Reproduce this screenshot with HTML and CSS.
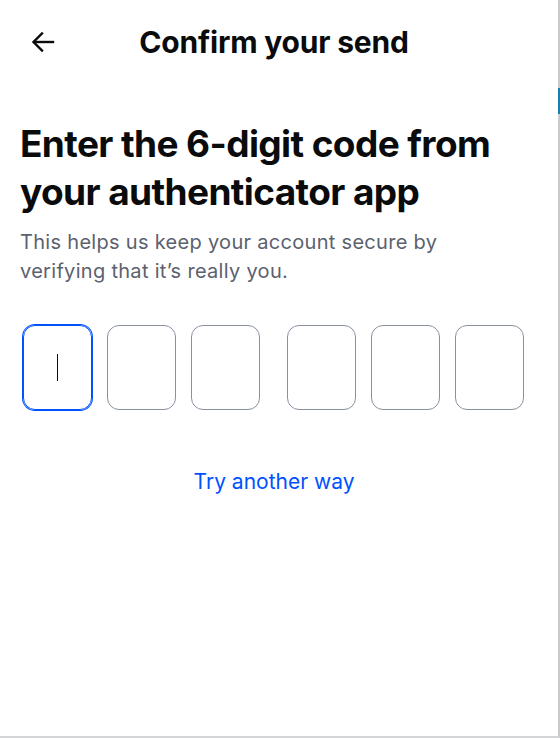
FILE: index.html
```html
<!DOCTYPE html>
<html>
<head>
<meta charset="utf-8">
<link rel="stylesheet" href="styles.css">
</head>
<body>
<div class="frame">
  <div class="scrollmark"></div>
  <header class="topbar">
    <button class="back" aria-label="Back">
      <svg width="24" height="24" viewBox="0 0 24 24" fill="none" stroke="#0a0b0d" stroke-width="2.4" stroke-linecap="square">
        <path d="M22 12H3.5"/>
        <path d="M11 3.5L2.5 12L11 20.5"/>
      </svg>
    </button>
    <h1 class="title">Confirm your send</h1>
    <span class="spacer"></span>
  </header>
  <main class="content">
    <h2 class="heading">Enter the 6-digit code from your authenticator app</h2>
    <p class="sub">This helps us keep your account secure by verifying that it’s really you.</p>
    <div class="code">
      <div class="group">
        <div class="box focused"><span class="caret"></span></div>
        <div class="box"></div>
        <div class="box"></div>
      </div>
      <div class="group">
        <div class="box"></div>
        <div class="box"></div>
        <div class="box"></div>
      </div>
    </div>
    <div class="alt"><a href="#" class="link">Try another way</a></div>
  </main>
</div>
</body>
</html>
```
FILE: styles.css
```css
* { box-sizing: border-box; }
html, body { margin: 0; padding: 0; background: #fff; }
body { font-family: Inter, "Noto Sans", sans-serif; color: #0a0b0d; }
.frame {
  position: relative;
  width: 560px;
  height: 738px;
  border-right: 2px solid #c9cacc;
  border-bottom: 2px solid #d4d5d7;
}
.scrollmark {
  position: absolute;
  right: -2px;
  top: 88px;
  width: 2px;
  height: 26px;
  background: #1a7fb0;
}
.topbar {
  display: flex;
  align-items: center;
  height: 84px;
  padding: 0 30px 0 20px;
}
.back {
  width: 48px;
  height: 48px;
  border: 0;
  background: none;
  padding: 0 0 0 11px;
  display: flex;
  align-items: center;
  cursor: pointer;
}
.title {
  flex: 1;
  margin: 0;
  text-align: center;
  font-size: 30px;
  font-weight: 700;
  letter-spacing: -0.2px;
}
.spacer { width: 48px; }
.content {
  padding: 36px 30px 0 20px;
}
.heading {
  margin: 0;
  font-size: 37px;
  line-height: 48px;
  font-weight: 700;
  letter-spacing: -0.6px;
}
.sub {
  margin: 12px 0 0;
  max-width: 480px;
  font-size: 20px;
  line-height: 29px;
  letter-spacing: 0.3px;
  color: #5b616e;
}
.code {
  display: flex;
  gap: 27px;
  margin: 39px 0 0 3px;
}
.group {
  display: flex;
  gap: 15px;
}
.box {
  width: 69px;
  height: 85px;
  border: 1px solid #8a919e;
  border-radius: 12px;
  display: flex;
  align-items: center;
  justify-content: center;
}
.box.focused {
  border: 1px solid #0052ff;
  box-shadow: 0 0 0 1px #0052ff;
}
.caret {
  width: 1.5px;
  height: 27px;
  background: #0a0b0d;
}
.alt {
  margin-top: 59px;
  text-align: center;
}
.link {
  color: #0052ff;
  font-size: 21px;
  text-decoration: none;
}
```
